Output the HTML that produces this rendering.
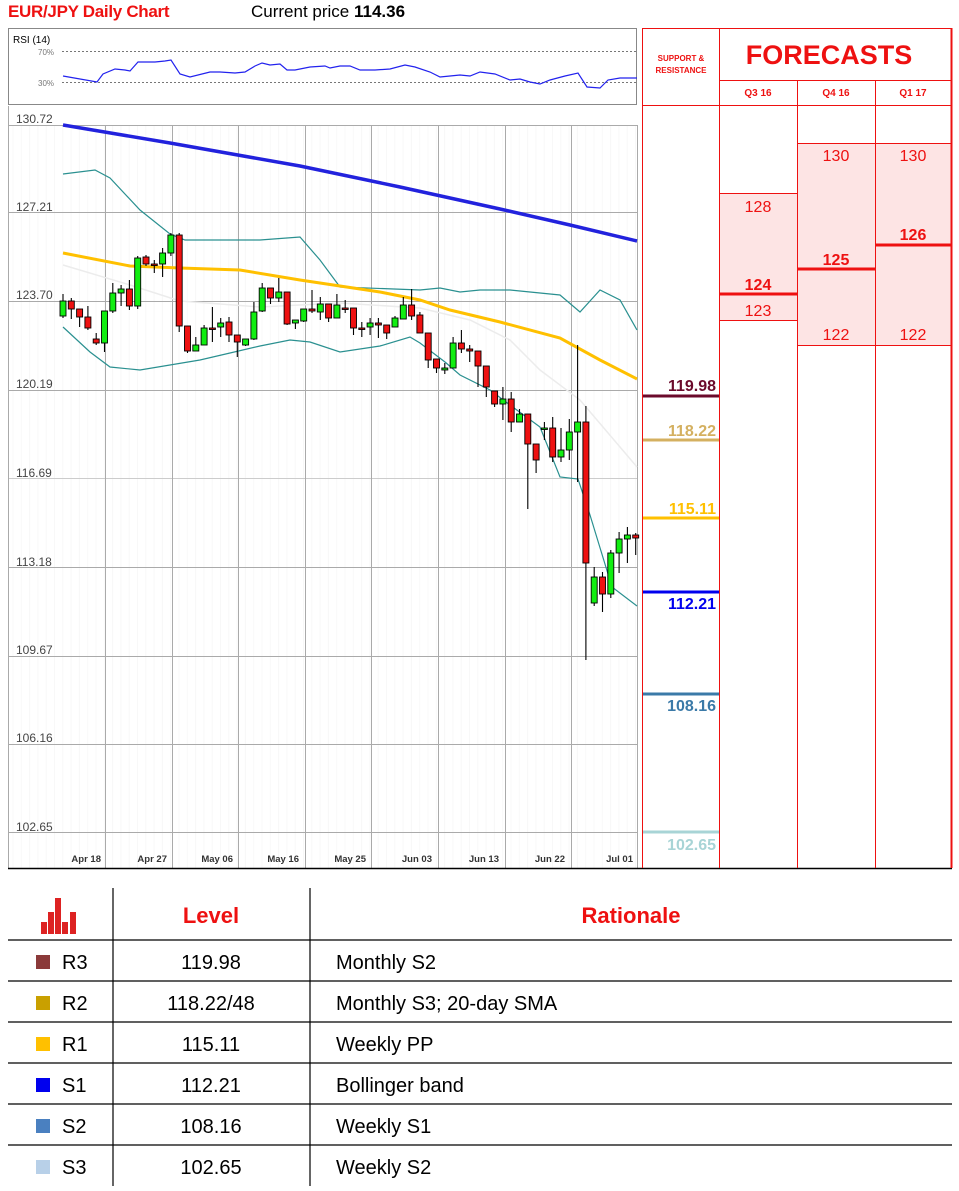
<!DOCTYPE html>
<html><head><meta charset="utf-8">
<style>
body{margin:0;background:#fff;width:959px;height:1191px;overflow:hidden;font-family:"Liberation Sans",sans-serif;position:relative}
.a{position:absolute}
</style></head><body>
<div class="a" style="left:8px;top:2px;color:#ee1111;font-weight:bold;font-size:17px;letter-spacing:-0.3px">EUR/JPY Daily Chart</div>
<div class="a" style="left:251px;top:2px;color:#000;font-size:17px">Current price <b>114.36</b></div>

<svg class="a" style="left:0;top:0" width="959" height="880" id="ch">
<rect x="8.5" y="28.5" width="628" height="76" fill="#fff" stroke="#888"/>
<text x="13" y="43" font-size="10" font-family="Liberation Sans" fill="#000">RSI (14)</text>
<text x="38" y="55" font-size="8" fill="#777" font-family="Liberation Sans">70%</text>
<text x="38" y="86" font-size="8" fill="#777" font-family="Liberation Sans">30%</text>
<line x1="62" y1="51.5" x2="637" y2="51.5" stroke="#777" stroke-dasharray="2,2"/>
<line x1="62" y1="82.5" x2="637" y2="82.5" stroke="#777" stroke-dasharray="2,2"/>
<polyline fill="none" stroke="#2222ee" stroke-width="1.2" points="63,76 80,79 97,82 103,74 115,69 125,70 130,71 138,62 155,62 165,61 171,60 180,74 190,77 210,72 220,72 235,73 245,72 255,66 262,63 270,65 280,64 287,70 295,70 310,67 325,66 330,68 340,66 350,66 360,70 375,70 390,69 405,65 415,67 430,72 440,77 450,76 460,75 470,76 480,72 495,74 510,80 520,79 530,82 540,84 550,80 565,76 578,73 587,87 600,88 608,80 620,78 637,78"/>
<g id="faint"></g>
<g stroke="#aaa" stroke-width="1">
<line x1="8" y1="125.5" x2="637" y2="125.5"/>
<line x1="8" y1="212.5" x2="637" y2="212.5"/>
<line x1="8" y1="301.5" x2="637" y2="301.5"/>
<line x1="8" y1="390.5" x2="637" y2="390.5"/>
<line x1="8" y1="478.5" x2="637" y2="478.5" stroke="#ccc"/>
<line x1="8" y1="567.5" x2="637" y2="567.5"/>
<line x1="8" y1="656.5" x2="637" y2="656.5"/>
<line x1="8" y1="744.5" x2="637" y2="744.5"/>
<line x1="8" y1="832.5" x2="637" y2="832.5"/>
<line x1="8.5" y1="106" x2="8.5" y2="868"/>
<line x1="105.5" y1="125" x2="105.5" y2="868"/>
<line x1="172.5" y1="125" x2="172.5" y2="868"/>
<line x1="238.5" y1="125" x2="238.5" y2="868"/>
<line x1="305.5" y1="125" x2="305.5" y2="868"/>
<line x1="371.5" y1="125" x2="371.5" y2="868"/>
<line x1="438.5" y1="125" x2="438.5" y2="868"/>
<line x1="505.5" y1="125" x2="505.5" y2="868"/>
<line x1="571.5" y1="125" x2="571.5" y2="868"/>
<line x1="637.5" y1="125" x2="637.5" y2="868"/>
</g>
<g font-family="Liberation Sans" font-size="12" fill="#444">
<text x="16" y="123">130.72</text><text x="16" y="211">127.21</text><text x="16" y="299">123.70</text><text x="16" y="388">120.19</text><text x="16" y="477">116.69</text><text x="16" y="566">113.18</text><text x="16" y="654">109.67</text><text x="16" y="742">106.16</text><text x="16" y="831">102.65</text>
</g>
<g font-family="Liberation Sans" font-size="9.5" fill="#333" text-anchor="end" font-weight="bold">
<text x="101" y="862">Apr 18</text><text x="167" y="862">Apr 27</text><text x="233" y="862">May 06</text><text x="299" y="862">May 16</text><text x="366" y="862">May 25</text><text x="432" y="862">Jun 03</text><text x="499" y="862">Jun 13</text><text x="565" y="862">Jun 22</text><text x="633" y="862">Jul 01</text>
</g>
<polyline fill="none" stroke="#ececec" stroke-width="1.5" points="63,265 130,285 180,301 260,307 340,303 420,308 470,320 510,340 540,370 580,400 637,467"/>
<polyline fill="none" stroke="#2a9090" stroke-width="1.2" points="63,174 95,170 110,178 140,210 170,234 185,240 260,240 300,237 320,260 340,287 420,290 440,288 460,292 480,290 510,290 560,295 580,312 600,290 620,300 637,330"/>
<polyline fill="none" stroke="#2a9090" stroke-width="1.2" points="63,327 90,352 110,367 140,370 200,360 230,353 260,346 290,340 310,342 340,352 380,346 410,337 420,343 445,362 460,375 490,390 510,405 540,427 560,477 578,479 590,515 612,587 637,606"/>
<polyline fill="none" stroke="#ffc000" stroke-width="3" points="63,253 130,266 180,268 240,270 300,280 380,292 420,300 450,310 500,322 560,338 600,360 637,379"/>
<polyline fill="none" stroke="#2222dd" stroke-width="3.5" points="63,125 170,143 300,166 400,187 500,209 570,225 637,241"/>
<g id="cd"></g>
<line x1="8" y1="868.5" x2="952" y2="868.5" stroke="#000" stroke-width="1.5"/>
<rect x="720" y="193" width="77" height="127" fill="#fde4e4"/>
<rect x="798" y="143" width="77" height="202" fill="#fde4e4"/>
<rect x="876" y="143" width="75" height="202" fill="#fde4e4"/>
<g stroke="#ee1111" stroke-width="1" fill="none">
<line x1="642.5" y1="28" x2="642.5" y2="868"/>
<line x1="719.5" y1="28" x2="719.5" y2="868"/>
<line x1="797.5" y1="80" x2="797.5" y2="868"/>
<line x1="875.5" y1="80" x2="875.5" y2="868"/>
<line x1="951.5" y1="28" x2="951.5" y2="868" stroke-width="2"/>
<line x1="642" y1="28.5" x2="952" y2="28.5"/>
<line x1="719" y1="80.5" x2="952" y2="80.5"/>
<line x1="642" y1="105.5" x2="952" y2="105.5"/>
<line x1="719" y1="193.5" x2="797" y2="193.5"/>
<line x1="719" y1="320.5" x2="797" y2="320.5"/>
<line x1="797" y1="143.5" x2="952" y2="143.5"/>
<line x1="797" y1="345.5" x2="952" y2="345.5"/>
</g>
<g stroke="#ee1111" stroke-width="3">
<line x1="719" y1="294" x2="797" y2="294"/>
<line x1="797" y1="269" x2="875" y2="269"/>
<line x1="875" y1="245" x2="952" y2="245"/>
</g>
<g font-family="Liberation Sans" fill="#ee1111" text-anchor="middle">
<text x="681" y="61" font-size="8" font-weight="bold">SUPPORT &amp;</text>
<text x="681" y="73" font-size="8" font-weight="bold">RESISTANCE</text>
<text x="829" y="64" font-size="27" font-weight="bold">FORECASTS</text>
<text x="758" y="96" font-size="10" font-weight="bold">Q3 16</text>
<text x="836" y="96" font-size="10" font-weight="bold">Q4 16</text>
<text x="913" y="96" font-size="10" font-weight="bold">Q1 17</text>
<text x="758" y="212" font-size="16">128</text>
<text x="758" y="290" font-size="16" font-weight="bold">124</text>
<text x="758" y="316" font-size="16">123</text>
<text x="836" y="161" font-size="16">130</text>
<text x="913" y="161" font-size="16">130</text>
<text x="913" y="240" font-size="16" font-weight="bold">126</text>
<text x="836" y="265" font-size="16" font-weight="bold">125</text>
<text x="836" y="340" font-size="16">122</text>
<text x="913" y="340" font-size="16">122</text>
</g>
<g stroke-width="3">
<line x1="643" y1="396" x2="719" y2="396" stroke="#6b0a2b"/>
<line x1="643" y1="440" x2="719" y2="440" stroke="#d4b060"/>
<line x1="643" y1="518" x2="719" y2="518" stroke="#ffc000"/>
<line x1="643" y1="592" x2="719" y2="592" stroke="#0000ee"/>
<line x1="643" y1="694" x2="719" y2="694" stroke="#3b7aa8"/>
<line x1="643" y1="832" x2="719" y2="832" stroke="#a8d4d6"/>
</g>
<g font-family="Liberation Sans" font-size="16" font-weight="bold" text-anchor="end">
<text x="716" y="391" fill="#6b0a2b">119.98</text>
<text x="716" y="436" fill="#d4b060">118.22</text>
<text x="716" y="514" fill="#ffc000">115.11</text>
<text x="716" y="609" fill="#0000ee">112.21</text>
<text x="716" y="711" fill="#3b7aa8">108.16</text>
<text x="716" y="850" fill="#a8d4d6">102.65</text>
</g>
</svg>

<svg class="a" style="left:0;top:880px" width="959" height="311">
<g stroke="#000" stroke-width="1.2">
<line x1="113" y1="8" x2="113" y2="306"/>
<line x1="310" y1="8" x2="310" y2="306"/>
<line x1="8" y1="60" x2="952" y2="60"/>
<line x1="8" y1="101" x2="952" y2="101"/>
<line x1="8" y1="142" x2="952" y2="142"/>
<line x1="8" y1="183" x2="952" y2="183"/>
<line x1="8" y1="224" x2="952" y2="224"/>
<line x1="8" y1="265" x2="952" y2="265"/>
</g>
<g fill="#dd2222">
<rect x="41" y="42" width="6" height="12"/><rect x="48" y="32" width="6" height="22"/><rect x="55" y="18" width="6" height="36"/><rect x="62" y="42" width="6" height="12"/><rect x="70" y="32" width="6" height="22"/>
</g>
<g font-family="Liberation Sans" font-size="22" font-weight="bold" fill="#ee1111" text-anchor="middle">
<text x="211" y="43">Level</text><text x="631" y="43">Rationale</text>
</g>
<rect x="36" y="75" width="14" height="14" fill="#8b3a3a"/>
<rect x="36" y="116" width="14" height="14" fill="#c9a000"/>
<rect x="36" y="157" width="14" height="14" fill="#ffc000"/>
<rect x="36" y="198" width="14" height="14" fill="#0000ee"/>
<rect x="36" y="239" width="14" height="14" fill="#4a80c0"/>
<rect x="36" y="280" width="14" height="14" fill="#b8d0e8"/>
<g font-family="Liberation Sans" font-size="20" fill="#000">
<text x="62" y="89">R3</text><text x="62" y="130">R2</text><text x="62" y="171">R1</text><text x="62" y="212">S1</text><text x="62" y="253">S2</text><text x="62" y="294">S3</text>
<g text-anchor="middle">
<text x="211" y="89">119.98</text><text x="211" y="130">118.22/48</text><text x="211" y="171">115.11</text><text x="211" y="212">112.21</text><text x="211" y="253">108.16</text><text x="211" y="294">102.65</text>
</g>
<text x="336" y="89">Monthly S2</text><text x="336" y="130">Monthly S3; 20-day SMA</text><text x="336" y="171">Weekly PP</text><text x="336" y="212">Bollinger band</text><text x="336" y="253">Weekly S1</text><text x="336" y="294">Weekly S2</text>
</g>
</svg>

<script>
var C=[[316,301,294,318],[301,309,298,319],[309,317,309,327],[317,328,306,330],[339,343,333,345],[343,311,311,352],[311,293,283,313],[293,289,285,306],[289,306,280,310],[306,258,256,309],[257,264,255,266],[264,264,260,273],[264,253,248,277],[253,235,233,256],[235,326,233,332],[326,351,326,353],[351,345,337,351],[345,328,325,345],[328,328,307,342],[327,323,318,337],[322,335,317,342],[335,342,335,357],[345,339,339,346],[339,312,302,340],[311,288,283,312],[288,298,288,304],[298,292,278,302],[292,324,292,325],[323,320,320,329],[321,309,309,322],[309,311,290,313],[312,304,297,320],[304,318,304,322],[318,305,294,318],[308,308,300,313],[308,328,308,335],[328,328,322,337],[327,323,318,335],[323,325,318,338],[325,333,325,339],[327,318,316,327],[319,305,297,319],[305,316,289,320],[315,333,312,333],[333,360,333,368],[359,368,359,373],[370,368,363,374],[368,343,337,368],[343,349,330,353],[349,351,345,362],[351,366,351,387],[366,387,366,397],[391,404,391,407],[404,399,387,420],[399,422,392,432],[422,414,409,422],[414,444,414,509],[444,460,444,473],[429,428,422,440],[428,457,417,462],[457,450,428,462],[450,432,419,460],[432,422,345,482],[422,563,406,660],[603,577,567,606],[577,594,572,612],[594,553,550,598],[553,539,532,573],[539,535,527,563],[535,538,533,555]];
var s='',f='';
for(var i=0;i<C.length;i++){var x=63+i*8.3,c=C[i],o=c[0],cl=c[1],t=Math.min(o,cl),h=Math.max(Math.abs(o-cl),1.5);
s+='<line x1="'+x+'" y1="'+c[2]+'" x2="'+x+'" y2="'+c[3]+'" stroke="#000" stroke-width="1.1"/>';
s+='<rect x="'+(x-3)+'" y="'+t+'" width="6" height="'+h+'" fill="'+(cl<o?'#11ee11':'#ee1111')+'" stroke="#000" stroke-width="0.9"/>';}
for(var x=13;x<637;x+=8.3){f+='<line x1="'+x+'" y1="125" x2="'+x+'" y2="868" stroke="#f8f8f8"/>';}
document.getElementById('cd').innerHTML=s;document.getElementById('faint').innerHTML=f;
</script>
</body></html>
